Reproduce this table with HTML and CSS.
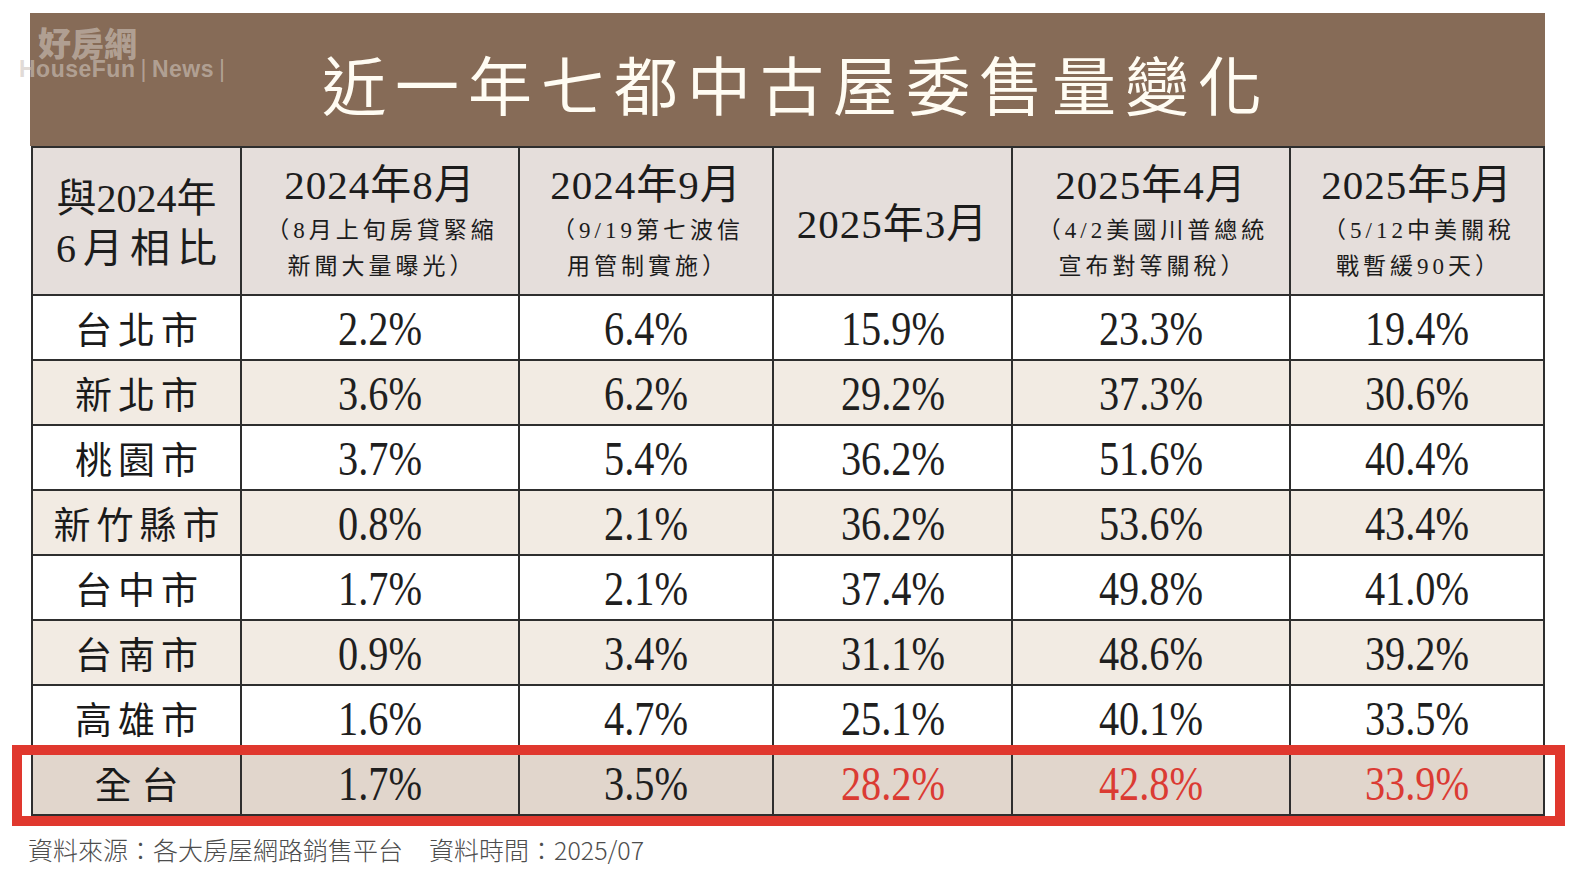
FILE: index.html
```html
<!DOCTYPE html>
<html lang="zh-Hant">
<head>
<meta charset="utf-8">
<title>近一年七都中古屋委售量變化</title>
<link rel="stylesheet" href="styles.css">
</head>
<body>
<main class="page">
  <section class="board">
    <div class="watermark">
      <div class="wm-cn">好房網</div>
      <div class="wm-en">HouseFun<span class="wm-bar">|</span>News<span class="wm-bar">|</span></div>
    </div>
    <h1 class="title">近一年七都中古屋委售量變化</h1>
    <table class="grid">
      <colgroup>
        <col class="c1"><col class="c2"><col class="c3"><col class="c4"><col class="c5"><col class="c6">
      </colgroup>
      <thead>
        <tr class="head-row">
          <th><div class="h-first">與2024年</div><div class="h-first spaced">6月相比</div></th>
          <th><div class="h-main">2024年8月</div><div class="h-sub">（8月上旬房貸緊縮</div><div class="h-sub">新聞大量曝光）</div></th>
          <th><div class="h-main">2024年9月</div><div class="h-sub">（9/19第七波信</div><div class="h-sub">用管制實施）</div></th>
          <th><div class="h-main solo">2025年3月</div></th>
          <th><div class="h-main">2025年4月</div><div class="h-sub">（4/2美國川普總統</div><div class="h-sub">宣布對等關稅）</div></th>
          <th><div class="h-main">2025年5月</div><div class="h-sub">（5/12中美關稅</div><div class="h-sub">戰暫緩90天）</div></th>
        </tr>
      </thead>
      <tbody>
        <tr class="row"><td class="city">台北市</td><td><span class="num">2.2%</span></td><td><span class="num">6.4%</span></td><td><span class="num">15.9%</span></td><td><span class="num">23.3%</span></td><td><span class="num">19.4%</span></td></tr>
        <tr class="row alt"><td class="city">新北市</td><td><span class="num">3.6%</span></td><td><span class="num">6.2%</span></td><td><span class="num">29.2%</span></td><td><span class="num">37.3%</span></td><td><span class="num">30.6%</span></td></tr>
        <tr class="row"><td class="city">桃園市</td><td><span class="num">3.7%</span></td><td><span class="num">5.4%</span></td><td><span class="num">36.2%</span></td><td><span class="num">51.6%</span></td><td><span class="num">40.4%</span></td></tr>
        <tr class="row alt"><td class="city">新竹縣市</td><td><span class="num">0.8%</span></td><td><span class="num">2.1%</span></td><td><span class="num">36.2%</span></td><td><span class="num">53.6%</span></td><td><span class="num">43.4%</span></td></tr>
        <tr class="row"><td class="city">台中市</td><td><span class="num">1.7%</span></td><td><span class="num">2.1%</span></td><td><span class="num">37.4%</span></td><td><span class="num">49.8%</span></td><td><span class="num">41.0%</span></td></tr>
        <tr class="row alt"><td class="city">台南市</td><td><span class="num">0.9%</span></td><td><span class="num">3.4%</span></td><td><span class="num">31.1%</span></td><td><span class="num">48.6%</span></td><td><span class="num">39.2%</span></td></tr>
        <tr class="row"><td class="city">高雄市</td><td><span class="num">1.6%</span></td><td><span class="num">4.7%</span></td><td><span class="num">25.1%</span></td><td><span class="num">40.1%</span></td><td><span class="num">33.5%</span></td></tr>
        <tr class="row total"><td class="city wide">全台</td><td><span class="num">1.7%</span></td><td><span class="num">3.5%</span></td><td><span class="num red">28.2%</span></td><td><span class="num red">42.8%</span></td><td><span class="num red">33.9%</span></td></tr>
      </tbody>
    </table>
    <div class="highlight"></div>
  </section>
  <p class="source">資料來源：各大房屋網路銷售平台<span class="gap">資料時間：2025/07</span></p>
</main>
</body>
</html>
```

FILE: styles.css
```css
* { box-sizing: border-box; }

html, body {
  margin: 0;
  padding: 0;
  background: #ffffff;
}

body {
  font-family: "Noto Sans CJK TC", "Noto Sans", sans-serif;
  color: #1c1c1c;
}

.page {
  width: 1583px;
  height: 883px;
  padding-top: 13px;
  overflow: hidden;
}

.board {
  position: relative;
  margin-left: 30px;
  width: 1515px;
}

.title {
  margin: 0;
  height: 133px;
  background: #866b57;
  color: #fffcf3;
  font-family: "Noto Sans CJK TC", sans-serif;
  font-size: 64px;
  font-weight: 400;
  letter-spacing: 9px;
  line-height: 1;
  display: flex;
  align-items: center;
  justify-content: center;
  padding: 4px 0 0 18px;
}

.watermark {
  position: absolute;
  left: -11px;
  top: 13px;
  color: rgba(206, 196, 188, 0.62);
  z-index: 1;
}

.wm-cn {
  margin-left: 19px;
  font-size: 33px;
  font-weight: 900;
  line-height: 33px;
  letter-spacing: 0;
}

.wm-en {
  font-family: "Liberation Sans", Arial, sans-serif;
  font-weight: 700;
  font-size: 23px;
  line-height: 20px;
  letter-spacing: 0.5px;
  white-space: nowrap;
}

.wm-bar {
  font-weight: 400;
  margin: 0 5px;
}

.grid {
  border-collapse: collapse;
  table-layout: fixed;
  width: 1512px;
  margin-left: 1px;
}

.c1 { width: 209px; }
.c2 { width: 278px; }
.c3 { width: 254px; }
.c4 { width: 239px; }
.c5 { width: 278px; }
.c6 { width: 254px; }

.grid th,
.grid td {
  border: 2px solid #2e2e2e;
  padding: 0;
  text-align: center;
  vertical-align: middle;
  font-weight: 400;
}

.head-row {
  height: 148px;
  background: #e5dedb;
}

.head-row th {
  padding-top: 6px;
}

.h-first {
  font-family: "Liberation Serif", "Noto Sans CJK TC", serif;
  font-size: 40px;
  line-height: 50px;
}

.h-first.spaced {
  letter-spacing: 7px;
  padding-left: 7px;
}

.h-main {
  font-family: "Liberation Serif", "Noto Sans CJK TC", serif;
  font-size: 41px;
  line-height: 44px;
  letter-spacing: 1px;
  margin-bottom: 6px;
}

.h-main.solo {
  margin-bottom: 0;
}

.h-sub {
  font-family: "Liberation Serif", "Noto Sans CJK TC", serif;
  font-size: 23px;
  line-height: 36px;
  letter-spacing: 4px;
  padding-left: 4px;
}

.row {
  height: 65px;
  background: #ffffff;
}

.row.alt {
  background: #f2ebe3;
}

.row.total {
  background: #e1d6cc;
}

.city {
  font-size: 37px;
  letter-spacing: 6px;
  padding-left: 6px !important;
  color: #1a1a1a;
}

.city.wide {
  letter-spacing: 10px;
  padding-left: 10px !important;
}

.num {
  display: inline-block;
  font-family: "Liberation Serif", serif;
  font-size: 48px;
  line-height: 1;
  padding-top: 3px;
  transform: scaleX(0.84);
  color: #1f1f1f;
}

.num.red {
  color: #db3b33;
}

.highlight {
  position: absolute;
  left: -18px;
  right: -20px;
  bottom: -10px;
  height: 81px;
  border: 10px solid #e0382e;
  pointer-events: none;
}

.source {
  margin: 18px 0 0 28px;
  font-size: 25px;
  line-height: 30px;
  font-weight: 300;
  color: #4d4d4d;
}

.gap {
  margin-left: 26px;
}
```
